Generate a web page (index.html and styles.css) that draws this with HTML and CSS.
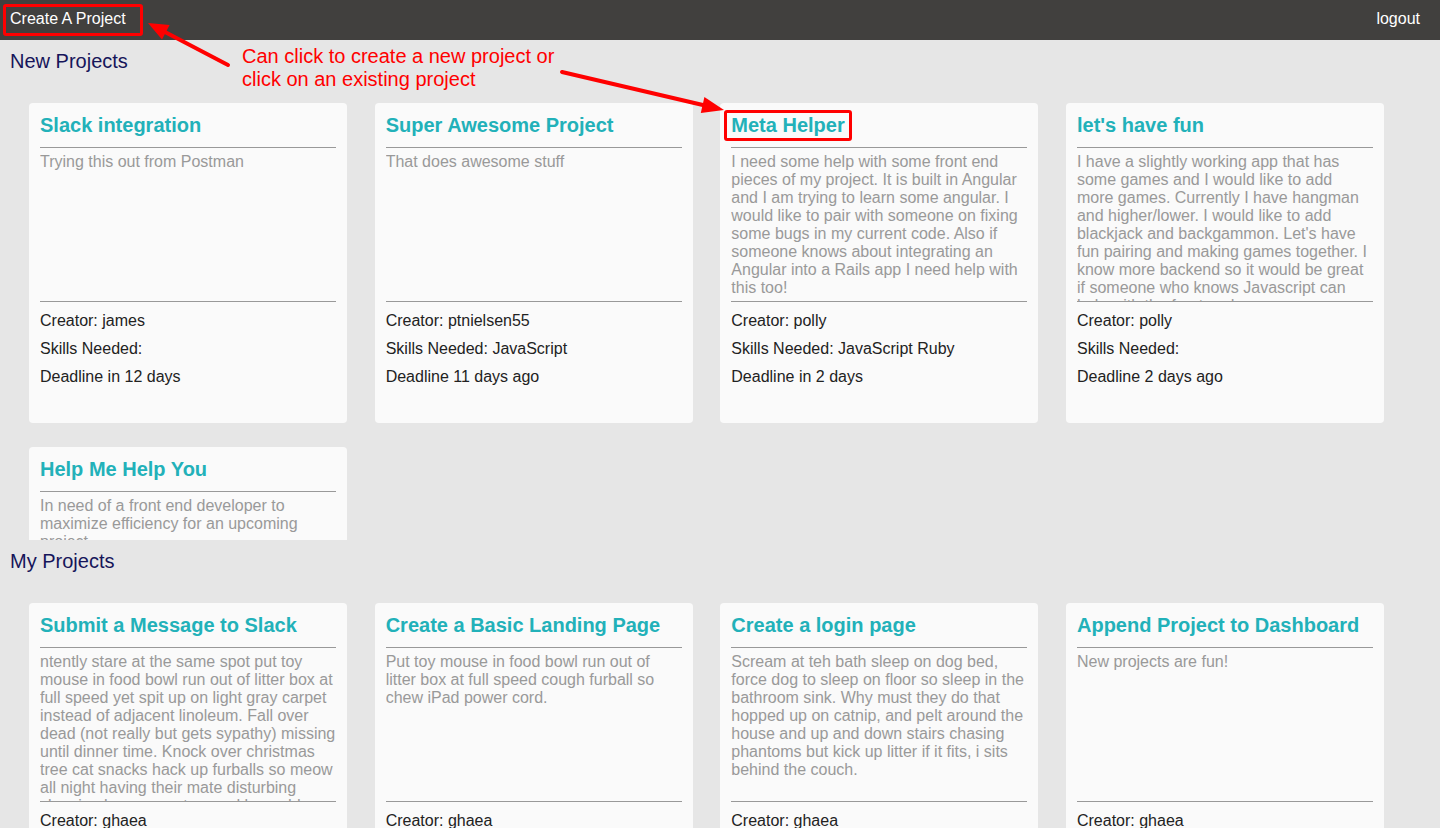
FILE: index.html
```html
<!DOCTYPE html>
<html>
<head>
<meta charset="utf-8">
<title>Projects</title>
<link rel="stylesheet" href="styles.css">
</head>
<body>
<header class="topbar">
  <a class="nav-link">Create A Project</a>
  <a class="nav-link">logout</a>
</header>

<section class="projects">
  <h2 class="section-title">New Projects</h2>
  <div class="grid">
    <div class="card">
      <h3 class="card-title">Slack integration</h3>
      <p class="card-desc">Trying this out from Postman</p>
      <div class="card-meta">
        <div class="meta-line">Creator: james</div>
        <div class="meta-line">Skills Needed: </div>
        <div class="meta-line">Deadline in 12 days</div>
      </div>
    </div>
    <div class="card">
      <h3 class="card-title">Super Awesome Project</h3>
      <p class="card-desc">That does awesome stuff</p>
      <div class="card-meta">
        <div class="meta-line">Creator: ptnielsen55</div>
        <div class="meta-line">Skills Needed: JavaScript</div>
        <div class="meta-line">Deadline 11 days ago</div>
      </div>
    </div>
    <div class="card">
      <h3 class="card-title">Meta Helper</h3>
      <p class="card-desc">I need some help with some front end pieces of my project. It is built in Angular and I am trying to learn some angular. I would like to pair with someone on fixing some bugs in my current code. Also if someone knows about integrating an Angular into a Rails app I need help with this too!</p>
      <div class="card-meta">
        <div class="meta-line">Creator: polly</div>
        <div class="meta-line">Skills Needed: JavaScript Ruby</div>
        <div class="meta-line">Deadline in 2 days</div>
      </div>
    </div>
    <div class="card">
      <h3 class="card-title">let's have fun</h3>
      <p class="card-desc">I have a slightly working app that has some games and I would like to add more games. Currently I have hangman and higher/lower. I would like to add blackjack and backgammon. Let's have fun pairing and making games together. I know more backend so it would be great if someone who knows Javascript can help with the front end.</p>
      <div class="card-meta">
        <div class="meta-line">Creator: polly</div>
        <div class="meta-line">Skills Needed: </div>
        <div class="meta-line">Deadline 2 days ago</div>
      </div>
    </div>
    <div class="card">
      <h3 class="card-title">Help Me Help You</h3>
      <p class="card-desc">In need of a front end developer to maximize efficiency for an upcoming project.</p>
      <div class="card-meta">
        <div class="meta-line">Creator: polly</div>
        <div class="meta-line">Skills Needed: </div>
        <div class="meta-line">Deadline in 5 days</div>
      </div>
    </div>
  </div>
</section>

<section class="projects">
  <h2 class="section-title">My Projects</h2>
  <div class="grid">
    <div class="card">
      <h3 class="card-title">Submit a Message to Slack</h3>
      <p class="card-desc">ntently stare at the same spot put toy mouse in food bowl run out of litter box at full speed yet spit up on light gray carpet instead of adjacent linoleum. Fall over dead (not really but gets sypathy) missing until dinner time. Knock over christmas tree cat snacks hack up furballs so meow all night having their mate disturbing sleeping humans get scared by sudden appearance of cat.</p>
      <div class="card-meta">
        <div class="meta-line">Creator: ghaea</div>
        <div class="meta-line">Skills Needed: </div>
        <div class="meta-line">Deadline in 3 days</div>
      </div>
    </div>
    <div class="card">
      <h3 class="card-title">Create a Basic Landing Page</h3>
      <p class="card-desc">Put toy mouse in food bowl run out of litter box at full speed cough furball so chew iPad power cord.</p>
      <div class="card-meta">
        <div class="meta-line">Creator: ghaea</div>
        <div class="meta-line">Skills Needed: </div>
        <div class="meta-line">Deadline in 4 days</div>
      </div>
    </div>
    <div class="card">
      <h3 class="card-title">Create a login page</h3>
      <p class="card-desc">Scream at teh bath sleep on dog bed, force dog to sleep on floor so sleep in the bathroom sink. Why must they do that hopped up on catnip, and pelt around the house and up and down stairs chasing phantoms but kick up litter if it fits, i sits behind the couch.</p>
      <div class="card-meta">
        <div class="meta-line">Creator: ghaea</div>
        <div class="meta-line">Skills Needed: </div>
        <div class="meta-line">Deadline in 6 days</div>
      </div>
    </div>
    <div class="card">
      <h3 class="card-title">Append Project to Dashboard</h3>
      <p class="card-desc">New projects are fun!</p>
      <div class="card-meta">
        <div class="meta-line">Creator: ghaea</div>
        <div class="meta-line">Skills Needed: </div>
        <div class="meta-line">Deadline in 7 days</div>
      </div>
    </div>
  </div>
</section>

<div class="note">Can click to create a new project or<br>click on an existing project</div>
<svg class="marks" width="1440" height="828" viewBox="0 0 1440 828" xmlns="http://www.w3.org/2000/svg">
  <rect x="4.5" y="5.5" width="137" height="29" rx="1.5" fill="none" stroke="#ff0000" stroke-width="3"/>
  <rect x="725.5" y="111.5" width="125" height="28" rx="1.5" fill="none" stroke="#ff0000" stroke-width="3"/>
  <line x1="228" y1="65" x2="164" y2="31.5" stroke="#ff0000" stroke-width="4" stroke-linecap="round"/>
  <polygon points="148,23 169.6,25 162,39.6" fill="#ff0000"/>
  <line x1="562" y1="72" x2="705" y2="105.5" stroke="#ff0000" stroke-width="4" stroke-linecap="round"/>
  <polygon points="724,110 704.4,97 700.8,113" fill="#ff0000"/>
</svg>
</body>
</html>
```

FILE: styles.css
```css
* { box-sizing: border-box; }

html, body {
  margin: 0;
  padding: 0;
}

body {
  position: relative;
  background: #e6e6e6;
  font-family: "Liberation Sans", Arial, Helvetica, sans-serif;
  font-size: 16px;
  color: #222;
}

.topbar {
  height: 40px;
  background: #41403e;
  display: flex;
  justify-content: space-between;
  align-items: center;
  padding: 0 20px 2px 10px;
}

.nav-link {
  color: #ffffff;
  font-size: 16px;
  line-height: 20px;
  text-decoration: none;
}

.projects {
  height: 500px;
  overflow: hidden;
}

.section-title {
  margin: 0;
  padding: 10px 10px 0;
  font-size: 20px;
  line-height: 22px;
  font-weight: normal;
  color: #16155a;
}

.grid {
  margin-top: 31px;
  padding-left: 29px;
  display: grid;
  grid-template-columns: repeat(4, 318px);
  column-gap: 27.67px;
  row-gap: 24px;
}

.card {
  height: 320px;
  background: #fafafa;
  border-radius: 4px;
  padding: 10px 11px 0;
}

.card-title {
  margin: 0;
  font-size: 20px;
  line-height: 24px;
  font-weight: bold;
  color: #22b1b9;
  padding-bottom: 10px;
  border-bottom: 1px solid #999;
  white-space: nowrap;
}

.card-desc {
  margin: 5px 0 0;
  height: 149px;
  overflow: hidden;
  font-size: 16px;
  line-height: 18px;
  color: #999;
  border-bottom: 1px solid #999;
}

.card-meta {
  padding-top: 5px;
}

.meta-line {
  line-height: 28px;
  font-size: 16px;
  color: #222;
}

.note {
  position: absolute;
  left: 242px;
  top: 45px;
  color: #ff0000;
  font-size: 20px;
  line-height: 23px;
}

.marks {
  position: absolute;
  left: 0;
  top: 0;
  pointer-events: none;
}
```
